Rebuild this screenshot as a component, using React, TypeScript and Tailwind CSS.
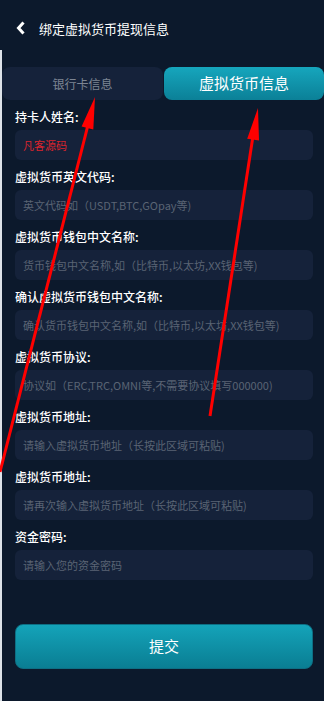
import React from "react";

const fields: { label: string; value?: string; placeholder?: string }[] = [
  { label: "持卡人姓名:", value: "凡客源码" },
  { label: "虚拟货币英文代码:", placeholder: "英文代码如（USDT,BTC,GOpay等)" },
  { label: "虚拟货币钱包中文名称:", placeholder: "货币钱包中文名称,如（比特币,以太坊,XX钱包等)" },
  { label: "确认虚拟货币钱包中文名称:", placeholder: "确认货币钱包中文名称,如（比特币,以太坊,XX钱包等)" },
  { label: "虚拟货币协议:", placeholder: "协议如（ERC,TRC,OMNI等,不需要协议填写000000)" },
  { label: "虚拟货币地址:", placeholder: "请输入虚拟货币地址（长按此区域可粘贴)" },
  { label: "虚拟货币地址:", placeholder: "请再次输入虚拟货币地址（长按此区域可粘贴)" },
  { label: "资金密码:", placeholder: "请输入您的资金密码" },
];

export default function App() {
  return (
    <div className="relative w-[324px] min-h-[701px] bg-[#0c192c] overflow-hidden font-['Noto_Sans_CJK_SC','Noto_Sans',sans-serif]">
      <div className="flex items-center h-[56px] pl-[16px] gap-[13px]">
        <svg width="10" height="14" viewBox="0 0 10 14">
          <path d="M7.5 1.5 L2.5 7 L7.5 12.5" fill="none" stroke="#ffffff" strokeWidth="3" strokeLinejoin="miter" />
        </svg>
        <span className="text-white text-[13px] leading-none">绑定虚拟货币提现信息</span>
      </div>

      <div className="mt-[11px] flex h-[33px] pl-[2px]">
        <div className="w-[161px] h-full rounded-[8px] bg-[#15223a] flex items-center justify-center text-[12px] text-[#7d8593]">
          银行卡信息
        </div>
        <div className="ml-[1px] flex-1 h-full rounded-[8px] bg-gradient-to-b from-[#16a6bd] to-[#0b8097] flex items-center justify-center text-[15px] text-white">
          虚拟货币信息
        </div>
      </div>

      <div className="pl-[15px] pr-[11px] pt-[7px] flex flex-col gap-[7px]">
        {fields.map((f, i) => (
          <div key={i} className="flex flex-col gap-[3px]">
            <div className="h-5 leading-5 text-[12px] font-medium text-white">{f.label}</div>
            <div className="h-[30px] rounded-[6px] bg-[#15223a] flex items-center px-[8px] text-[11px] whitespace-nowrap overflow-hidden">
              {f.value ? (
                <span className="text-[#d9242d]">{f.value}</span>
              ) : (
                <span className="text-[#5a6474]">{f.placeholder}</span>
              )}
            </div>
          </div>
        ))}
        <button className="mt-[37px] h-[45px] rounded-[8px] bg-gradient-to-b from-[#14a3b9] to-[#0a7e93] border border-[#0d6f84] text-white text-[15px] flex items-center justify-center">
          提交
        </button>
      </div>

      <div className="absolute left-0 top-[50px] bottom-0 w-[2px] bg-[#dde2e8]" />

      <svg className="absolute inset-0 pointer-events-none" width="324" height="701" viewBox="0 0 324 701">
        <line x1="88" y1="125" x2="0" y2="472" stroke="#ff0000" strokeWidth="3" />
        <polygon points="95,97 93.3,129.6 81.6,126.6" fill="#ff0000" />
        <line x1="253" y1="136" x2="210" y2="416" stroke="#ff0000" strokeWidth="3" />
        <polygon points="258,108 259,140.5 247.2,138.7" fill="#ff0000" />
      </svg>
    </div>
  );
}
